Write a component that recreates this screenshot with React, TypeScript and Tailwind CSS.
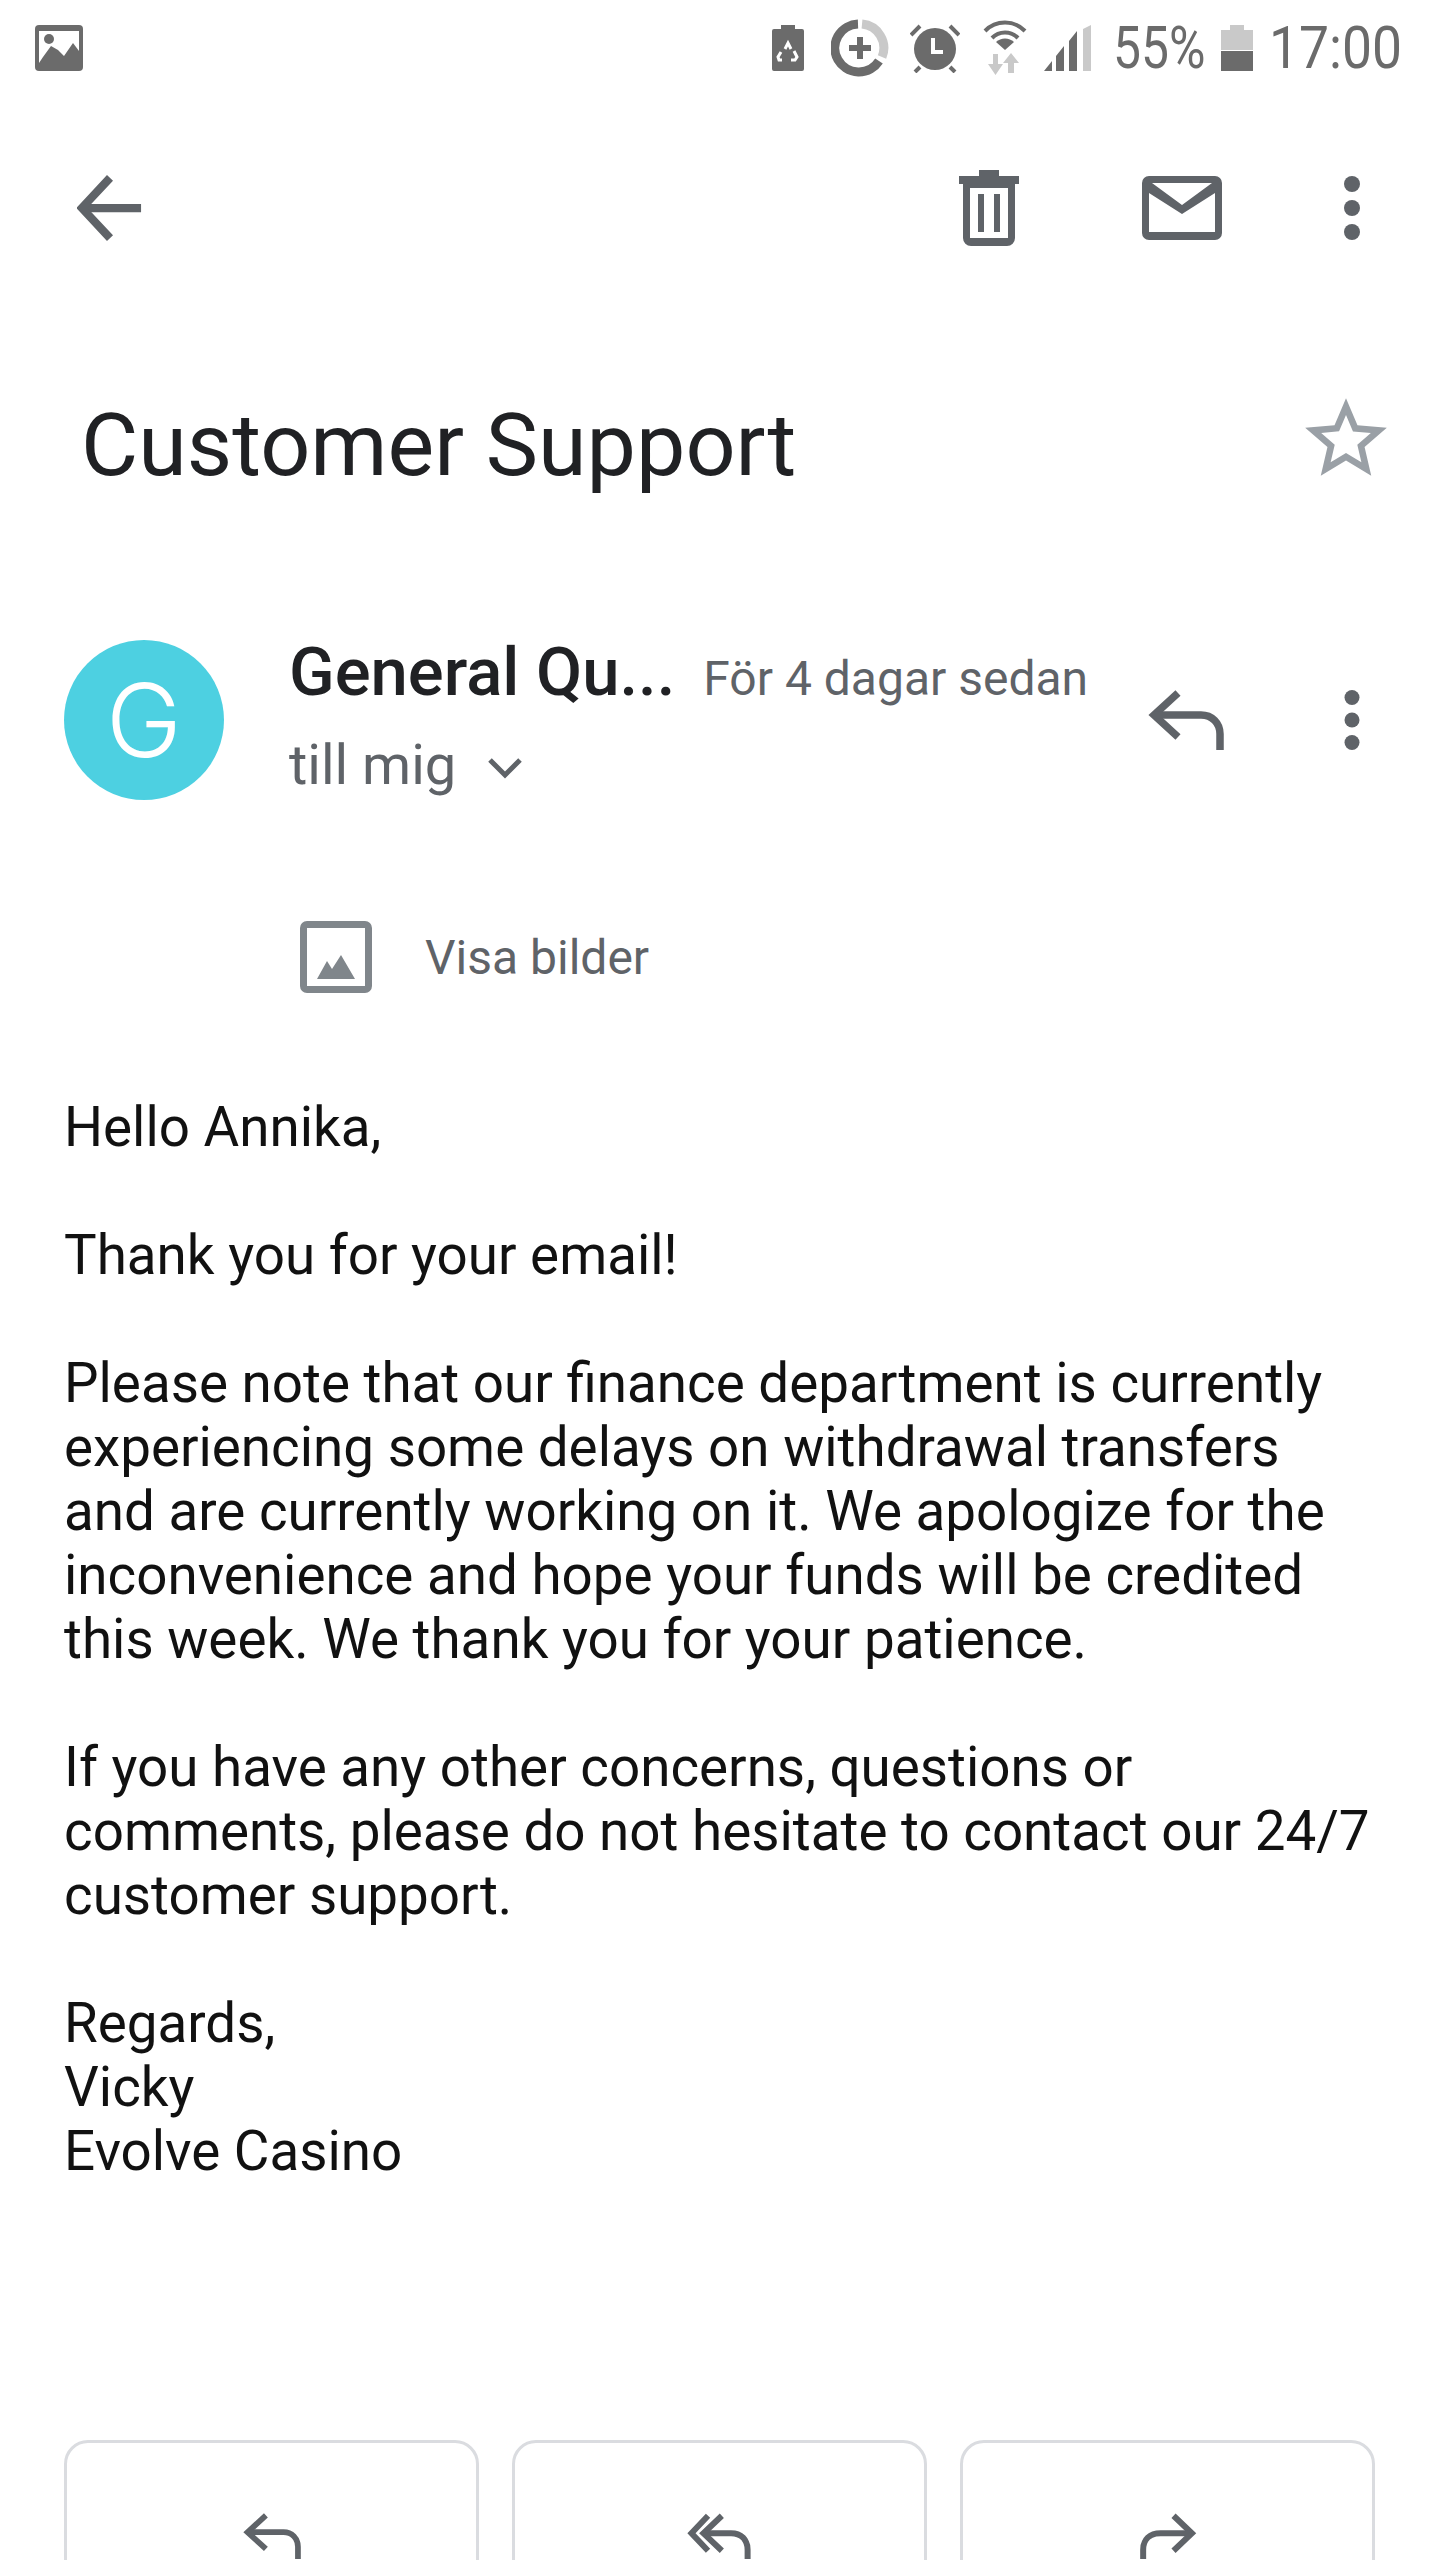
import React from 'react'

const grey = '#5f6368'

const paragraphs = [
  ['Hello Annika,'],
  ['Thank you for your email!'],
  [
    'Please note that our finance department is currently',
    'experiencing some delays on withdrawal transfers',
    'and are currently working on it. We apologize for the',
    'inconvenience and hope your funds will be credited',
    'this week. We thank you for your patience.',
  ],
  [
    'If you have any other concerns, questions or',
    'comments, please do not hesitate to contact our 24/7',
    'customer support.',
  ],
  ['Regards,', 'Vicky', 'Evolve Casino'],
]

function Dots({ className }: { className: string }) {
  return (
    <svg viewBox="0 0 16 64" className={className} fill={grey}>
      <circle cx="8" cy="8" r="8" />
      <circle cx="8" cy="32" r="8" />
      <circle cx="8" cy="56" r="8" />
    </svg>
  )
}

function ReplyIcon({ className }: { className: string }) {
  return (
    <svg viewBox="0 0 76 60" className={className} fill="none" stroke={grey} strokeWidth="7.500">
      <path d="M30 3 6 25l24 22" />
      <path d="M6 25h47c11 0 19 8 19 19v16" />
    </svg>
  )
}

function ReplyAllIcon({ className }: { className: string }) {
  return (
    <svg viewBox="0 0 70 50" className={className} fill="none" stroke={grey} strokeWidth="6.500">
      <path d="M22 3 4 22l18 19" />
      <path d="M37 3 17 22l20 19" />
      <path d="M17 22h30c11 0 18 7 18 18v10" />
    </svg>
  )
}

function ForwardIcon({ className }: { className: string }) {
  return (
    <svg viewBox="0 0 64 50" className={className} fill="none" stroke={grey} strokeWidth="6.500">
      <path d="M38 3 58 22 38 41" />
      <path d="M58 22H24C12 22 5 29 5 40v10" />
    </svg>
  )
}

function StatusIcons() {
  const c = '#6b6b6b'
  const l = '#c9c9c9'
  return (
    <div className="flex items-center">
      <svg viewBox="0 0 32 46" className="w-[32px] h-[46px]">
        <path fill={c} d="M9 0h14v4h7a2 2 0 0 1 2 2v38a2 2 0 0 1-2 2H2a2 2 0 0 1-2-2V6a2 2 0 0 1 2-2h7z" />
        <path fill="none" stroke="#fff" strokeWidth="3" d="M13 24l3-6 3 6M22 26l3 6-2 3h-4M10 35H7l-1-3 3-5" />
      </svg>
      <svg viewBox="0 0 58 58" className="w-[58px] h-[58px] ml-[27px]">
        <path fill="none" stroke={c} strokeWidth="9" d="M27 5A24 24 0 1 0 48 42" />
        <path fill="none" stroke={l} strokeWidth="9" d="M31 5a24 24 0 0 1 20 33" />
        <path fill={c} d="M26 18h6v8h8v6h-8v8h-6v-8h-8v-6h8z" />
      </svg>
      <svg viewBox="0 0 50 50" className="w-[50px] h-[50px] ml-[21px]">
        <circle cx="25" cy="26" r="21" fill={c} />
        <path fill="none" stroke="#fff" strokeWidth="4" d="M23 15v14h10" />
        <path fill="none" stroke={c} strokeWidth="4" d="M1 12l9-9M49 12l-9-9M5 49l5-5M45 49l-5-5" />
      </svg>
      <svg viewBox="0 0 44 56" className="w-[44px] h-[56px] ml-[23px]">
        <path fill="none" stroke={c} strokeWidth="4" d="M2 11a28 28 0 0 1 40 0M9 18a18 18 0 0 1 26 0" />
        <path fill={c} d="M22 30 13 22a13 13 0 0 1 18 0z" />
        <path fill={l} d="M10 34h5v10h5l-7.500 11L5 44h5z" />
        <path fill={l} d="M28 33l8 10h-5v10h-6V43h-5z" />
      </svg>
      <svg viewBox="0 0 50 46" className="w-[50px] h-[46px] ml-[17px]">
        <path fill={c} d="M0 46 8 36v10zM12 46V31l8-10v25zM25 46V16l8-10v40z" />
        <path fill={l} d="M39 46V4l8-4v46z" />
      </svg>
      <span className="ml-[19px] w-[92px] inline-block origin-left scale-x-[.83] text-[#6b6b6b] text-[60px] leading-none whitespace-nowrap">
        55%
      </span>
      <svg viewBox="0 0 32 46" className="w-[32px] h-[46px] ml-[16px]">
        <path fill={l} d="M9 0h14v5h9v20H0V5h9z" />
        <path fill={c} d="M0 26h32v20H0z" />
      </svg>
      <span className="ml-[16px] w-[133px] inline-block origin-left scale-x-[.89] text-[#6b6b6b] text-[60px] leading-none whitespace-nowrap">
        17:00
      </span>
    </div>
  )
}

export default function App() {
  return (
    <div className="w-[1440px] h-[2560px] overflow-hidden bg-white font-['Roboto',sans-serif]">
      <div className="h-[96px] flex items-center justify-between pl-[35px] pr-[38px]">
        <svg viewBox="0 0 48 46" className="w-[48px] h-[46px]">
          <path fill="#6b6b6b" d="M4 0h40a4 4 0 0 1 4 4v38a4 4 0 0 1-4 4H4a4 4 0 0 1-4-4V4a4 4 0 0 1 4-4z" />
          <path fill="#fff" d="M4 6h40v20l-6-8-9 13-6-6-7-4-8 11-4 6z" />
          <circle cx="14" cy="14" r="5" fill="#6b6b6b" />
        </svg>
        <StatusIcons />
      </div>

      <div className="h-[224px] flex items-center pl-[77px] pr-[80px]">
        <svg viewBox="0 0 68 68" className="w-[66px] h-[66px]" fill="none" stroke={grey} strokeWidth="8.500">
          <path d="M66 34H6" />
          <path d="M34 3 5 34l29 31" />
        </svg>
        <svg viewBox="0 0 60 76" className="w-[62px] h-[76px] ml-auto" fill={grey}>
          <path d="M20 0h20v6h20v8H0V6h20z" />
          <path d="M4 14h52v54a8 8 0 0 1-8 8H12a8 8 0 0 1-8-8zm7 4v50h38V18z" />
          <path d="M19 24h6v38h-6zM35 24h6v38h-6z" />
        </svg>
        <svg viewBox="0 0 80 64" className="w-[80px] h-[64px] ml-[122px]" fill={grey}>
          <path d="M7 0h66a7 7 0 0 1 7 7v50a7 7 0 0 1-7 7H7a7 7 0 0 1-7-7V7a7 7 0 0 1 7-7zm0 56h66V17L40 38 7 17zM10 7l30 22L70 7z" />
        </svg>
        <Dots className="w-[16px] h-[64px] ml-[122px]" />
      </div>

      <div className="h-[250px] flex items-center pl-[81px] pr-[45px]">
        <h1 className="text-[88px] leading-none text-[#202124] font-normal">Customer Support</h1>
        <svg viewBox="0 0 24 24" className="w-[98px] h-[98px] ml-auto mb-[12px]" fill="#9aa0a6">
          <path d="M22 9.240l-7.190-.620L12 2 9.190 8.630 2 9.240l5.460 4.730L5.820 21 12 17.270 18.180 21l-1.630-7.030L22 9.240zM12 15.400l-3.760 2.270 1-4.280-3.320-2.880 4.380-.380L12 6.100l1.710 4.040 4.380.380-3.320 2.880 1 4.280L12 15.400z" />
        </svg>
      </div>

      <div className="flex items-center pl-[64px] pr-[80px] mt-[70px] h-[160px]">
        <div className="w-[160px] h-[160px] rounded-full bg-[#4dd0e1] flex items-center justify-center text-white text-[102px] font-light leading-none font-['Inter',sans-serif]">
          G
        </div>
        <div className="ml-[65px] w-[800px] mb-[8px]">
          <div className="flex items-baseline mb-[14px]">
            <span className="text-[67px] leading-[80px] font-medium text-[#202124]">General Qu...</span>
            <span className="ml-[28px] text-[48px] text-[#5f6368]">För 4 dagar sedan</span>
          </div>
          <div className="flex items-center">
            <span className="text-[56px] leading-[72px] text-[#5f6368]">till mig</span>
            <svg viewBox="0 0 34 22" className="w-[34px] h-[22px] ml-[32px] mt-[6px]" fill="none" stroke={grey} strokeWidth="5">
              <path d="M2 3l15 15L32 3" />
            </svg>
          </div>
        </div>
        <ReplyIcon className="w-[76px] h-[60px] ml-[59px]" />
        <Dots className="w-[16px] h-[60px] ml-auto" />
      </div>

      <div className="flex items-center pl-[300px] mt-[120px] h-[76px]">
        <svg viewBox="0 0 72 72" className="w-[72px] h-[72px] mb-[3px]" fill="#80868b">
          <path d="M7 0h58a7 7 0 0 1 7 7v58a7 7 0 0 1-7 7H7a7 7 0 0 1-7-7V7a7 7 0 0 1 7-7zm0 7v58h58V7z" />
          <path d="M12 58l10-18 5 8 9-14 14 24z" transform="translate(5 0)" />
        </svg>
        <span className="ml-[53px] text-[48px] text-[#5f6368]">Visa bilder</span>
      </div>

      <div className="mt-[99px] pl-[64px] text-[54.750px] leading-[64px] text-[#111]">
        {paragraphs.map((lines, i) => (
          <p key={i} className="mb-[64px]">
            {lines.map((line) => (
              <span key={line} className="block whitespace-nowrap">
                {line}
              </span>
            ))}
          </p>
        ))}
      </div>

      <div className="mt-[257px] pl-[64px] flex gap-[33px]">
        <div className="w-[415px] h-[200px] border-[3px] border-[#dadce0] rounded-[24px] flex justify-center pt-[70px]">
          <ReplyIcon className="w-[58px] h-[46px]" />
        </div>
        <div className="w-[415px] h-[200px] border-[3px] border-[#dadce0] rounded-[24px] flex justify-center pt-[70px]">
          <ReplyAllIcon className="w-[66px] h-[46px]" />
        </div>
        <div className="w-[415px] h-[200px] border-[3px] border-[#dadce0] rounded-[24px] flex justify-center pt-[70px]">
          <ForwardIcon className="w-[60px] h-[46px]" />
        </div>
      </div>
    </div>
  )
}
